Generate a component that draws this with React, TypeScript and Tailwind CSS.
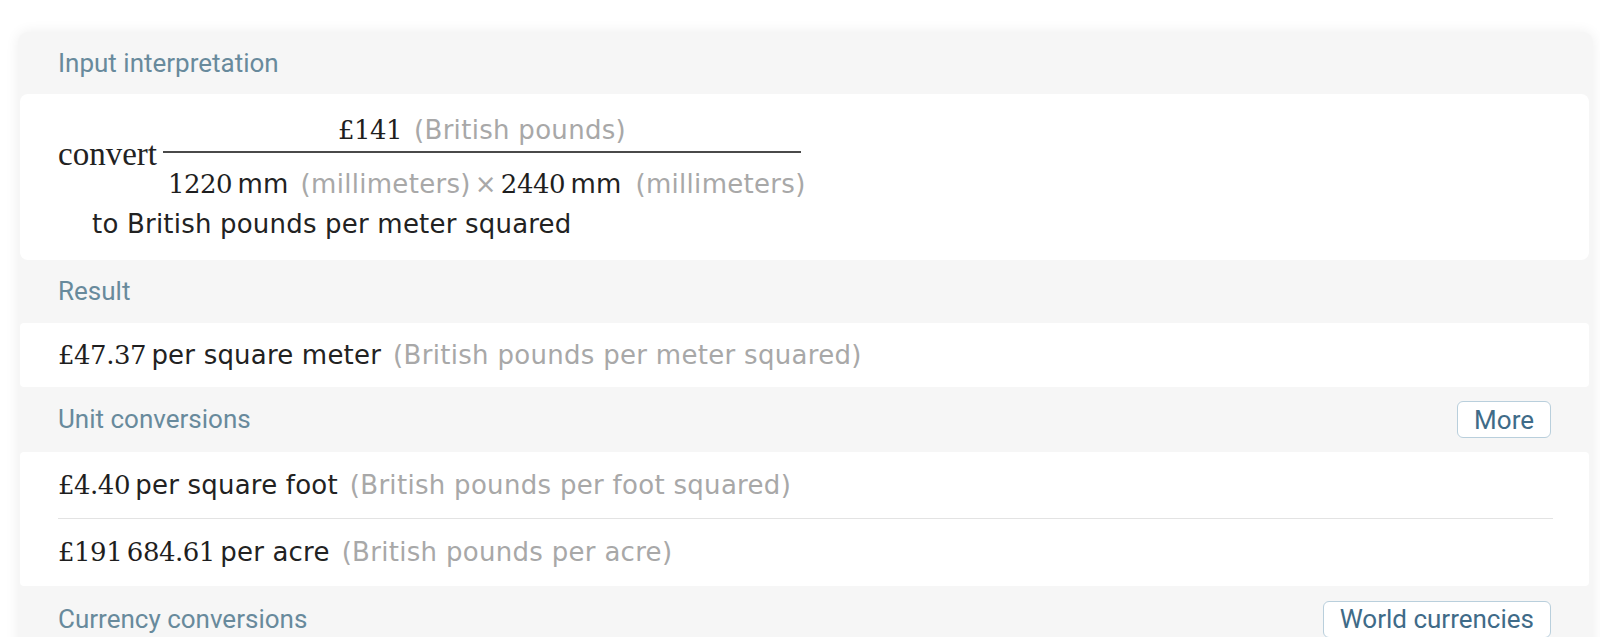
import React from "react"

const serif = "font-['Liberation_Serif',serif]"
const numFont = "font-['DejaVu_Serif',serif]"
const sans = "font-['DejaVu_Sans',sans-serif]"
const roboto = "font-['Roboto',sans-serif]"

function Num({ children }: { children: React.ReactNode }) {
  return <span className={`${numFont} text-[26px] tracking-[-0.5px] text-[#1e1e1e]`}>{children}</span>
}

function Word({ children }: { children: React.ReactNode }) {
  return <span className={`${sans} text-[26px] tracking-[0.2px] text-[#222]`}>{children}</span>
}

function Gray({ children, className = "" }: { children: React.ReactNode; className?: string }) {
  return <span className={`${sans} text-[26px] tracking-[0.3px] text-[#a8a8a8] ${className}`}>{children}</span>
}

function PodHeader({ title, button, h = "h-[64px]" }: { title: string; button?: string; h?: string }) {
  return (
    <div className={`flex ${h} items-center justify-between pl-[40px] pr-[42px]`}>
      <span className={`${roboto} text-[26px] text-[#688a9c]`}>{title}</span>
      {button && (
        <button
          className={`${roboto} h-[37px] rounded-[6px] border border-[#b9cfdc] bg-white px-[16px] text-[26px] leading-none text-[#3f6b88]`}
        >
          {button}
        </button>
      )}
    </div>
  )
}

function Row({ children, h = "h-[64px]" }: { children: React.ReactNode; h?: string }) {
  return <div className={`flex ${h} items-center whitespace-nowrap`}>{children}</div>
}

export default function App() {
  return (
    <div className="h-[637px] w-[1600px] overflow-hidden bg-white pl-[18px] pt-[32px]">
      <div className="w-[1575px] rounded-t-[10px] bg-[#f6f6f6] pb-[20px] shadow-[0_0_14px_rgba(0,0,0,0.07)]">
        <PodHeader title="Input interpretation" h="h-[62px]" />
        <div className="ml-[2px] mr-[4px] h-[166px] rounded-[8px] bg-white pl-[38px] pt-[18px]">
          <div className="flex items-center">
            <span className={`${serif} mr-[6px] mt-[-6px] text-[33px] leading-none text-[#222]`}>convert</span>
            <div className="flex w-[638px] flex-col">
              <div className="flex h-[36px] items-center justify-center whitespace-nowrap">
                <Num>£141</Num>
                <Gray className="ml-[12px]">(British pounds)</Gray>
              </div>
              <div className="mt-[3px] h-[2px] w-[638px] bg-[#4a4a4a]" />
              <div className="mt-[13px] flex h-[36px] items-center whitespace-nowrap pl-[5px]">
                <Num>1220</Num>
                <Word>&#8201;mm</Word>
                <Gray className="ml-[12px]">(millimeters)</Gray>
                <Gray className="mx-[4px]">×</Gray>
                <Num>2440</Num>
                <Word>&#8201;mm</Word>
                <Gray className="ml-[14px]">(millimeters)</Gray>
              </div>
            </div>
          </div>
          <div className="mt-[4px] flex h-[36px] items-center pl-[34px]">
            <Word>to British pounds per meter squared</Word>
          </div>
        </div>

        <PodHeader title="Result" h="h-[63px]" />
        <div className="ml-[2px] mr-[4px] rounded-[4px] bg-white pl-[38px]">
          <Row>
            <Num>£47.37</Num>
            <Word>&#8201;per square meter</Word>
            <Gray className="ml-[12px]">(British pounds per meter squared)</Gray>
          </Row>
        </div>

        <PodHeader title="Unit conversions" button="More" h="h-[65px]" />
        <div className="ml-[2px] mr-[4px] rounded-[4px] bg-white pl-[38px] pr-[36px]">
          <Row h="h-[66px]">
            <Num>£4.40</Num>
            <Word>&#8201;per square foot</Word>
            <Gray className="ml-[12px]">(British pounds per foot squared)</Gray>
          </Row>
          <div className="h-px bg-[#e3e3e3]" />
          <Row h="h-[67px]">
            <Num>£191&#8201;684.61</Num>
            <Word>&#8201;per acre</Word>
            <Gray className="ml-[12px]">(British pounds per acre)</Gray>
          </Row>
        </div>

        <PodHeader title="Currency conversions" button="World currencies" h="h-[66px]" />
      </div>
    </div>
  )
}
